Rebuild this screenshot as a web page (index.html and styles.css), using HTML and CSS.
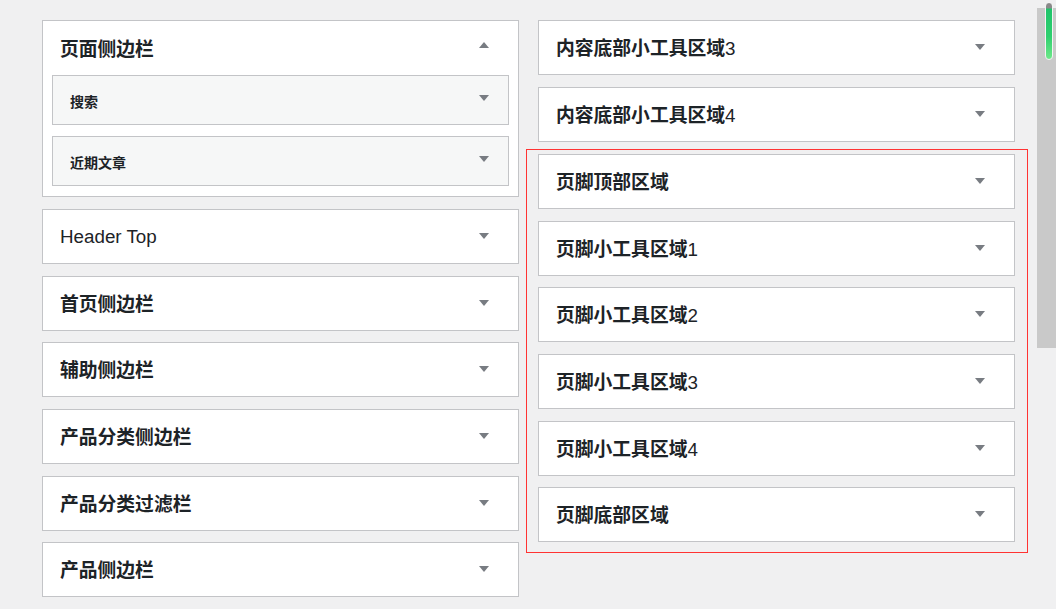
FILE: index.html
```html
<!DOCTYPE html>
<html lang="zh-CN">
<head>
<meta charset="utf-8">
<title>小工具</title>
<link rel="stylesheet" href="styles.css">
</head>
<body>
<div class="page">
  <div class="col col-left">
    <div class="box open">
      <div class="box-head"><h3 class="title"><span class="zh">页面侧边栏</span></h3><span class="arrow up"></span></div>
      <div class="box-body">
        <div class="widget"><h4 class="wtitle">搜索</h4><span class="arrow"></span></div>
        <div class="widget"><h4 class="wtitle">近期文章</h4><span class="arrow"></span></div>
      </div>
    </div>
    <div class="box"><div class="box-head"><h3 class="title">Header Top</h3><span class="arrow"></span></div></div>
    <div class="box"><div class="box-head"><h3 class="title"><span class="zh">首页侧边栏</span></h3><span class="arrow"></span></div></div>
    <div class="box"><div class="box-head"><h3 class="title"><span class="zh">辅助侧边栏</span></h3><span class="arrow"></span></div></div>
    <div class="box"><div class="box-head"><h3 class="title"><span class="zh">产品分类侧边栏</span></h3><span class="arrow"></span></div></div>
    <div class="box"><div class="box-head"><h3 class="title"><span class="zh">产品分类过滤栏</span></h3><span class="arrow"></span></div></div>
    <div class="box"><div class="box-head"><h3 class="title"><span class="zh">产品侧边栏</span></h3><span class="arrow"></span></div></div>
  </div>
  <div class="col col-right">
    <div class="holder">
      <div class="box"><div class="box-head"><h3 class="title"><span class="zh">内容底部小工具区域</span>3</h3><span class="arrow"></span></div></div>
      <div class="box"><div class="box-head"><h3 class="title"><span class="zh">内容底部小工具区域</span>4</h3><span class="arrow"></span></div></div>
    </div>
    <div class="holder marked">
      <div class="box"><div class="box-head"><h3 class="title"><span class="zh">页脚顶部区域</span></h3><span class="arrow"></span></div></div>
      <div class="box"><div class="box-head"><h3 class="title"><span class="zh">页脚小工具区域</span>1</h3><span class="arrow"></span></div></div>
      <div class="box"><div class="box-head"><h3 class="title"><span class="zh">页脚小工具区域</span>2</h3><span class="arrow"></span></div></div>
      <div class="box"><div class="box-head"><h3 class="title"><span class="zh">页脚小工具区域</span>3</h3><span class="arrow"></span></div></div>
      <div class="box"><div class="box-head"><h3 class="title"><span class="zh">页脚小工具区域</span>4</h3><span class="arrow"></span></div></div>
      <div class="box"><div class="box-head"><h3 class="title"><span class="zh">页脚底部区域</span></h3><span class="arrow"></span></div></div>
    </div>
  </div>
</div>
<div class="scrollbar"><div class="thumb"></div></div>
</body>
</html>
```

FILE: styles.css
```css
* { box-sizing: border-box; }
html, body {
  margin: 0;
  padding: 0;
  background: #f0f0f1;
  width: 1056px;
  height: 609px;
  overflow: hidden;
}
body {
  font-family: "Liberation Sans", "Noto Sans CJK SC", sans-serif;
  color: #1d2327;
  position: relative;
}
.page {
  display: flex;
  align-items: flex-start;
  padding: 20px 0 0 42px;
  gap: 7px;
}
.col-left { width: 477px; }
.col-right { width: 502px; }

.box {
  background: #fff;
  border: 1px solid #c3c4c7;
  margin-bottom: 11.67px;
  width: 477px;
}
.box-head {
  height: 53px;
  display: flex;
  align-items: center;
  justify-content: space-between;
  padding: 0 29px 0 17px;
}
.title {
  margin: 2px 0 0 0;
  font-size: 18.8px;
  font-weight: 400;
  line-height: 1;
  white-space: nowrap;
}
.zh {
  font-family: "Noto Sans CJK SC", sans-serif;
  font-weight: 700;
}
.box.open { margin-bottom: 12px; }
.box.open .box-head { height: 54px; }
.box-body {
  padding: 0 9px 10px 9px;
}
.widget {
  height: 50px;
  background: #f6f7f7;
  border: 1px solid #c3c4c7;
  display: flex;
  align-items: center;
  justify-content: space-between;
  padding: 0 19px 0 17px;
  margin-bottom: 11px;
}
.widget:last-child { margin-bottom: 0; }
.widget .arrow { margin-top: -5px; }
.wtitle {
  margin: 1px 0 0 0;
  font-family: "Noto Sans CJK SC", sans-serif;
  font-size: 14px;
  font-weight: 700;
  line-height: 1;
}
.arrow {
  width: 0;
  height: 0;
  border-left: 5px solid transparent;
  border-right: 5px solid transparent;
  border-top: 6px solid #787c82;
  margin-top: -1px;
}
.arrow.up {
  border-top: 0;
  border-bottom: 6px solid #787c82;
  margin-top: -7px;
}

.holder {
  border: 1px solid transparent;
  padding: 0 12px 0 11px;
}
.holder .box:last-child { margin-bottom: 0; }
.holder:first-child { margin-top: -1px; margin-bottom: 6.33px; }
.holder.marked {
  border-color: #f33;
  padding: 4px 12px 10px 11px;
}

.scrollbar {
  position: absolute;
  left: 1037px;
  top: 8px;
  width: 19px;
  height: 340px;
  background: #c9c9c9;
}
.thumb {
  position: absolute;
  left: 8px;
  top: -6px;
  width: 8px;
  height: 58px;
  border-radius: 4px;
  border: 1px solid #f4f4f4;
  background: linear-gradient(to bottom, #8a8a8a 0, #8a8a8a 5px, #1fc46a 6px, #2fd06f 60%, #6ee889 100%);
}
```
